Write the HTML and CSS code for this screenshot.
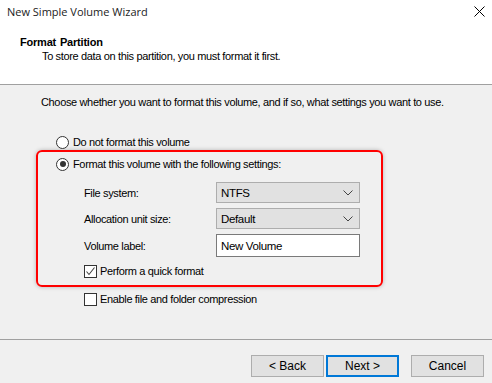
FILE: index.html
```html
<!DOCTYPE html>
<html lang="en">
<head>
    <meta charset="UTF-8">
    <title>New Simple Volume Wizard</title>
    <link rel="stylesheet" href="styles.css">
</head>
<body>
    <div class="window">
        <div class="top">
            <div class="titlebar">
                <span class="title">New Simple Volume Wizard</span>
                <svg class="close" width="11" height="11" viewBox="0 0 11 11">
                    <path d="M0.5 0.5 L10.5 10.5 M10.5 0.5 L0.5 10.5" stroke="#000" stroke-width="1" fill="none"/>
                </svg>
            </div>
            <div class="page-head">
                <div class="page-title">Format Partition</div>
                <div class="page-sub">To store data on this partition, you must format it first.</div>
            </div>
        </div>

        <div class="content">
            <p class="intro">Choose whether you want to format this volume, and if so, what settings you want to use.</p>

            <label class="option first">
                <span class="radio"></span>
                Do not format this volume
            </label>

            <div class="group">
                <label class="option">
                    <span class="radio checked"></span>
                    Format this volume with the following settings:
                </label>

                <div class="field">
                    <span class="field-label">File system:</span>
                    <div class="combo">NTFS
                        <svg width="10" height="6" viewBox="0 0 10 6"><path d="M0.5 0.5 L5 5 L9.5 0.5" stroke="#444" fill="none"/></svg>
                    </div>
                </div>
                <div class="field">
                    <span class="field-label">Allocation unit size:</span>
                    <div class="combo">Default
                        <svg width="10" height="6" viewBox="0 0 10 6"><path d="M0.5 0.5 L5 5 L9.5 0.5" stroke="#444" fill="none"/></svg>
                    </div>
                </div>
                <div class="field">
                    <span class="field-label">Volume label:</span>
                    <div class="textbox">New Volume</div>
                </div>

                <label class="check-row quick">
                    <span class="checkbox">
                        <svg width="11" height="11" viewBox="0 0 11 11"><path d="M1.5 5.5 L4 8.5 L9.5 1.5" stroke="#444" stroke-width="1.1" fill="none"/></svg>
                    </span>
                    Perform a quick format
                </label>
            </div>

            <label class="check-row compress">
                <span class="checkbox"></span>
                Enable file and folder compression
            </label>
        </div>

        <div class="footer">
            <button class="btn">&lt; Back</button>
            <button class="btn default">Next &gt;</button>
            <button class="btn cancel">Cancel</button>
        </div>
    </div>
</body>
</html>
```

FILE: styles.css
```css
body {
    margin: 0;
    font-family: "Liberation Sans", Arial, sans-serif;
    font-size: 11px;
    letter-spacing: -0.35px;
    color: #000;
    background: #f0f0f0;
}
.window {
    width: 492px;
    height: 383px;
    overflow: hidden;
    background: #f0f0f0;
}
.top {
    background: #fff;
    height: 85px;
    border-bottom: 1px solid #a0a0a0;
    box-sizing: border-box;
}
.titlebar {
    display: flex;
    justify-content: space-between;
    align-items: center;
    height: 22px;
    padding: 0 7px 0 7px;
}
.title {
    font-family: "Open Sans", "Noto Sans", sans-serif;
    font-size: 11px;
    letter-spacing: 0;
    color: #222;
}
.page-head {
    padding: 13px 0 0 20px;
}
.page-title {
    font-weight: bold;
    letter-spacing: -0.2px;
    word-spacing: 1px;
    line-height: 14px;
}
.page-sub {
    padding-left: 22px;
    line-height: 14px;
}
.content {
    height: 255px;
    box-sizing: border-box;
    padding-top: 10px;
    border-bottom: 1px solid #a0a0a0;
}
.intro {
    margin: 0 0 0 41px;
    line-height: 14px;
}
.option {
    display: flex;
    align-items: center;
    gap: 4px;
    line-height: 14px;
}
.option.first {
    margin: 26px 0 0 56px;
}
.radio {
    width: 11px;
    height: 11px;
    border: 1px solid #333;
    border-radius: 50%;
    background: #fff;
    position: relative;
}
.radio.checked::after {
    content: "";
    position: absolute;
    left: 2.5px;
    top: 2.5px;
    width: 6px;
    height: 6px;
    border-radius: 50%;
    background: #333;
}
.group {
    margin: 1px 0 0 36px;
    width: 347px;
    height: 137px;
    box-sizing: border-box;
    border: 2px solid #ff0000;
    border-radius: 6px;
    box-shadow: 0 0 4px rgba(0, 0, 0, 0.25);
    padding: 5px 0 0 18px;
}
.field {
    display: flex;
    align-items: center;
    margin-left: 28px;
    margin-top: 5px;
}
.field:first-of-type {
    margin-top: 11px;
}
.field-label {
    width: 132px;
}
.combo {
    display: flex;
    justify-content: space-between;
    align-items: center;
    width: 144px;
    height: 21px;
    box-sizing: border-box;
    padding: 0 6px 0 4px;
    background: #e1e1e1;
    border: 1px solid #adadad;
    font-size: 11.5px;
}
.textbox {
    width: 144px;
    height: 23px;
    box-sizing: border-box;
    padding: 4px 4px;
    background: #fff;
    border: 1px solid #7a7a7a;
    font-size: 11.5px;
    line-height: 14px;
}
.check-row {
    display: flex;
    align-items: center;
    gap: 3px;
    line-height: 14px;
}
.checkbox {
    width: 11px;
    height: 11px;
    border: 1px solid #333;
    background: #fff;
    display: flex;
    align-items: center;
    justify-content: center;
}
.quick {
    margin: 7px 0 0 28px;
}
.compress {
    margin: 5px 0 0 84px;
}
.footer {
    display: flex;
    padding: 15px 0 0 251px;
}
.btn {
    width: 73px;
    height: 22px;
    margin: 0;
    padding: 0;
    font-family: "Liberation Sans", Arial, sans-serif;
    font-size: 12px;
    letter-spacing: 0;
    color: #000;
    background: #e1e1e1;
    border: 1px solid #adadad;
}
.btn.default {
    margin-left: 2px;
    border: 2px solid #0078d7;
}
.btn.cancel {
    margin-left: 12px;
}
```
